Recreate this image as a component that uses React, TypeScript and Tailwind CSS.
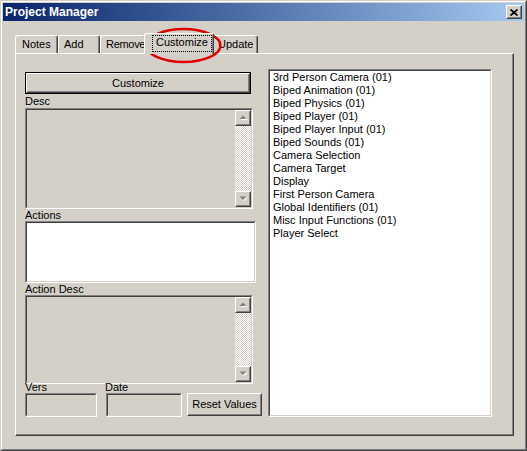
import React from "react";

function Sunken({ className = "", inner = "", children }: { className?: string; inner?: string; children?: React.ReactNode }) {
  return (
    <div className={`border border-t-[#808080] border-l-[#808080] border-b-white border-r-white ${className}`}>
      <div className={`h-full w-full border border-t-[#404040] border-l-[#404040] border-b-[#d4d0c8] border-r-[#d4d0c8] ${inner}`}>
        {children}
      </div>
    </div>
  );
}

function Raised({ className = "", inner = "", children }: { className?: string; inner?: string; children?: React.ReactNode }) {
  return (
    <div className={`border border-t-white border-l-white border-b-[#404040] border-r-[#404040] bg-[#d4d0c8] ${className}`}>
      <div className={`h-full w-full border border-t-[#d4d0c8] border-l-[#d4d0c8] border-b-[#808080] border-r-[#808080] ${inner}`}>
        {children}
      </div>
    </div>
  );
}

function Arrow({ down }: { down?: boolean }) {
  return (
    <Raised className="h-[16px] w-[16px] shrink-0" inner="flex items-center justify-center">
      <svg width="9" height="6" viewBox="0 0 9 6">
        {down ? (
          <>
            <polygon points="1.5,1.5 8.5,1.5 5,5" fill="#ffffff" />
            <polygon points="0.5,0.5 7.5,0.5 4,4" fill="#808080" />
          </>
        ) : (
          <>
            <polygon points="1.5,5 8.5,5 5,1.5" fill="#ffffff" />
            <polygon points="0.5,4 7.5,4 4,0.5" fill="#808080" />
          </>
        )}
      </svg>
    </Raised>
  );
}

function ScrollBox({ h }: { h: string }) {
  return (
    <Sunken className={`w-[228px] ${h}`} inner="flex flex-row justify-end">
      <div className="flex h-full w-[16px] flex-col">
        <Arrow />
        <div className="flex-1 bg-[image:repeating-conic-gradient(#ffffff_0_25%,#d4d0c8_0_50%)] bg-[length:2px_2px]" />
        <Arrow down />
      </div>
    </Sunken>
  );
}

function Tab({ label, w, extra = "" }: { label: string; w: string; extra?: string }) {
  return (
    <div
      className={`${w} h-[18px] rounded-t-[3px] border-t border-l border-r border-t-white border-l-white border-r-[#404040] shadow-[inset_-1px_0_#808080] pl-[5px] pt-[2px] leading-[13px] whitespace-nowrap ${extra}`}
    >
      {label}
    </div>
  );
}

export default function App() {
  const items = [
    "3rd Person Camera (01)",
    "Biped Animation (01)",
    "Biped Physics (01)",
    "Biped Player (01)",
    "Biped Player Input (01)",
    "Biped Sounds (01)",
    "Camera Selection",
    "Camera Target",
    "Display",
    "First Person Camera",
    "Global Identifiers (01)",
    "Misc Input Functions (01)",
    "Player Select",
  ];

  return (
    <div className="relative h-[451px] w-[527px] overflow-hidden bg-[#d4d0c8] font-[family-name:Liberation_Sans,Arial,sans-serif] text-[11px] leading-[13px] text-black">
      <div className="h-full border border-t-[#d4d0c8] border-l-[#d4d0c8] border-b-[#404040] border-r-[#404040]">
        <div className="flex h-full flex-col border border-t-white border-l-white border-b-[#808080] border-r-[#808080] p-px">
          {/* Title bar */}
          <div className="flex h-[18px] items-center bg-linear-to-r from-[#0a246a] to-[#a6caf0] pl-[2px] pr-[2px]">
            <span className="flex-1 text-[12px] font-bold leading-[18px] text-white">Project Manager</span>
            <Raised className="h-[14px] w-[16px]" inner="flex items-center justify-center">
              <svg width="8" height="7" viewBox="0 0 8 7">
                <path d="M0.5 0.5 L7.5 6.5 M7.5 0.5 L0.5 6.5" stroke="#000" strokeWidth="1.7" />
              </svg>
            </Raised>
          </div>

          {/* Body */}
          <div className="pl-[12px] pt-[12px]">
            {/* Tabs */}
            <div className="flex h-[20px] items-end">
              <Tab label="Notes" w="w-[43px]" extra="pl-[6px]" />
              <Tab label="Add" w="w-[42px]" />
              <Tab label="Remove" w="w-[46px]" extra="tracking-[-0.3px]" />
              <div className="relative z-10 -mx-[2px] -mb-px flex h-[21px] w-[70px] justify-start rounded-t-[3px] border-t border-l border-r border-t-white border-l-white border-r-[#404040] bg-[#d4d0c8] pl-[7px] shadow-[inset_-1px_0_#808080]">
                <span className="mt-px h-[17px] border border-dotted border-black px-[3px] leading-[13px]">Customize</span>
              </div>
              <Tab label="Update" w="w-[46px]" />
            </div>

            {/* Panel */}
            <div className="flex h-[383px] w-[499px] items-start border border-t-white border-l-white border-b-[#404040] border-r-[#404040] shadow-[inset_-1px_-1px_#808080]">
              {/* Left column */}
              <div className="ml-[9px] mt-[18px] flex w-[237px] flex-col">
                <div className="h-[22px] w-[226px] border border-black">
                  <Raised className="h-full w-full" inner="flex items-center justify-center">
                    Customize
                  </Raised>
                </div>
                <div className="h-[14px] pt-px">Desc</div>
                <ScrollBox h="h-[101px]" />
                <div className="h-[12px] leading-[12px]">Actions</div>
                <Sunken className="h-[62px] w-[231px]" inner="bg-white" />
                <div className="h-[12px] leading-[12px]">Action Desc</div>
                <ScrollBox h="h-[89px]" />
                <div className="flex h-[9px] leading-[7px]">
                  <span className="w-[80px]">Vers</span>
                  <span>Date</span>
                </div>
                <div className="flex items-start">
                  <Sunken className="h-[24px] w-[72px]" />
                  <Sunken className="ml-[9px] h-[24px] w-[76px]" />
                  <Raised className="ml-[5px] h-[23px] w-[75px]" inner="flex items-center justify-center">
                    Reset Values
                  </Raised>
                </div>
              </div>

              {/* Right list */}
              <Sunken className="ml-[6px] mt-[15px] h-[348px] w-[224px]" inner="bg-white pl-[3px]">
                {items.map((it) => (
                  <div key={it} className="h-[13px] whitespace-nowrap leading-[13px]">
                    {it}
                  </div>
                ))}
              </Sunken>
            </div>
          </div>
        </div>
      </div>

      {/* Red annotation ellipse */}
      <svg className="absolute left-[144px] top-[27px]" width="80" height="38" viewBox="0 0 80 38">
        <ellipse cx="39.5" cy="18.5" rx="37" ry="16.5" fill="none" stroke="#e00000" strokeWidth="2.5" />
      </svg>
    </div>
  );
}
